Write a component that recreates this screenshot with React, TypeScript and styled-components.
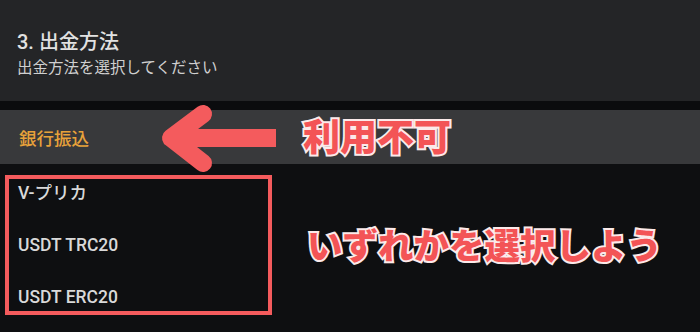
import React from "react";
import styled, { createGlobalStyle } from "styled-components";

const GlobalStyle = createGlobalStyle`
  html, body {
    margin: 0;
    padding: 0;
    background: #0e0f11;
  }
  body {
    font-family: "Roboto", "Noto Sans CJK JP", sans-serif;
  }
`;

const Screen = styled.div`
  position: relative;
  width: 700px;
  height: 332px;
  overflow: hidden;
  background: #0e0f11;
  display: flex;
  flex-direction: column;
`;

const Header = styled.header`
  height: 101px;
  box-sizing: border-box;
  padding: 29px 17px 0;
  background: #242527;
  display: flex;
  flex-direction: column;
  gap: 2px;
`;

const Title = styled.h2`
  margin: 0;
  font-size: 20px;
  line-height: 26px;
  font-weight: 500;
  color: #e2e2e2;
`;

const Subtitle = styled.p`
  margin: 0;
  font-size: 15.5px;
  line-height: 22px;
  color: #cfcfcf;
`;

const Divider = styled.div`
  height: 9px;
  background: #0b0c0e;
`;

const MethodRow = styled.div<{ $disabled?: boolean }>`
  height: 54px;
  display: flex;
  align-items: center;
  padding-left: 19px;
  font-size: 17.5px;
  font-weight: 500;
  background: ${(p) => (p.$disabled ? "#38393b" : "transparent")};
  color: ${(p) => (p.$disabled ? "#e8a23a" : "#d9d9d9")};
`;

const ListArea = styled.div`
  padding: 11px 0 0 5px;
`;

const Highlight = styled.div`
  width: 267px;
  height: 140px;
  box-sizing: border-box;
  border: 4px solid #f45b5d;
  padding-left: 9px;
  display: flex;
  flex-direction: column;
  gap: 24px;
`;

const Method = styled.div`
  font-size: 17.5px;
  font-weight: 500;
  line-height: 28px;
  color: #d9d9d9;
`;

const Arrow = styled.svg`
  position: absolute;
  left: 150px;
  top: 100px;
`;

const Note = styled.span<{ $x: number; $y: number; $size: number }>`
  position: absolute;
  left: ${(p) => p.$x}px;
  top: ${(p) => p.$y}px;
  font-family: "Noto Sans CJK JP", sans-serif;
  font-weight: 900;
  font-size: ${(p) => p.$size}px;
  line-height: 1;
  white-space: nowrap;
  color: #f35456;
  -webkit-text-stroke: 4px #fbeaea;
  paint-order: stroke fill;
`;

const methods = ["V-プリカ", "USDT TRC20", "USDT ERC20"];

export default function App() {
  return (
    <Screen>
      <GlobalStyle />
      <Header>
        <Title>3. 出金方法</Title>
        <Subtitle>出金方法を選択してください</Subtitle>
      </Header>
      <Divider />
      <MethodRow $disabled>銀行振込</MethodRow>
      <ListArea>
        <Highlight>
          {methods.map((m) => (
            <Method key={m}>{m}</Method>
          ))}
        </Highlight>
      </ListArea>

      <Arrow width="140" height="80" viewBox="0 0 140 80">
        <path
          d="M53 14 L21 38 L53 63"
          fill="none"
          stroke="#f45b5d"
          strokeWidth="18"
          strokeLinecap="round"
          strokeLinejoin="round"
        />
        <path d="M24 38 L126 38" stroke="#f45b5d" strokeWidth="18" />
      </Arrow>
      <Note $x={303} $y={117} $size={37}>
        利用不可
      </Note>
      <Note $x={307} $y={226} $size={35.5}>
        いずれかを選択しよう
      </Note>
    </Screen>
  );
}
